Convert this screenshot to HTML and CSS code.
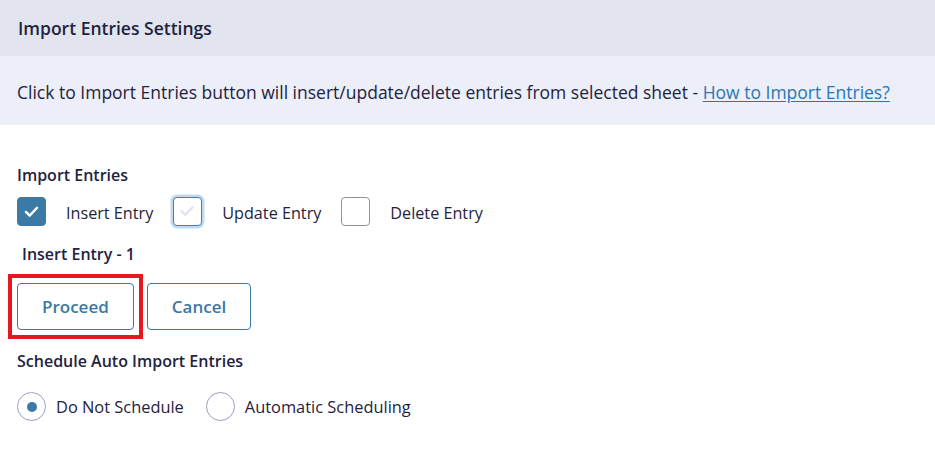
FILE: index.html
```html
<!DOCTYPE html>
<html lang="en">
<head>
<meta charset="utf-8">
<title>Import Entries Settings</title>
<link rel="stylesheet" href="styles.css">
</head>
<body>
<div class="panel">
  <div class="panel-head">Import Entries Settings</div>
  <div class="notice">Click to Import Entries button will insert/update/delete entries from selected sheet - <a href="#" class="notice-link">How to Import Entries?</a></div>
  <div class="panel-body">
    <div class="field-label">Import Entries</div>
    <div class="check-row">
      <label class="check-item">
        <span class="checkbox checkbox-on">
          <svg viewBox="0 0 29 29" width="29" height="29"><polyline points="8.5,15 12.5,19 20.5,10.5" fill="none" stroke="#ffffff" stroke-width="2.6" stroke-linecap="round" stroke-linejoin="round"/></svg>
        </span>
        <span class="check-text">Insert Entry</span>
      </label>
      <label class="check-item">
        <span class="checkbox checkbox-focus">
          <svg viewBox="0 0 29 29" width="27" height="27"><polyline points="8,14 12,18 20,10" fill="none" stroke="#dfe1f1" stroke-width="2.4" stroke-linecap="round" stroke-linejoin="round"/></svg>
        </span>
        <span class="check-text">Update Entry</span>
      </label>
      <label class="check-item">
        <span class="checkbox"></span>
        <span class="check-text">Delete Entry</span>
      </label>
    </div>
    <div class="count-label">Insert Entry - 1</div>
    <div class="actions">
      <button class="btn btn-marked">Proceed</button>
      <button class="btn">Cancel</button>
    </div>
    <div class="field-label schedule-label">Schedule Auto Import Entries</div>
    <div class="radio-row">
      <label class="radio-item">
        <span class="radio radio-on"></span>
        <span class="radio-text">Do Not Schedule</span>
      </label>
      <label class="radio-item">
        <span class="radio"></span>
        <span class="radio-text">Automatic Scheduling</span>
      </label>
    </div>
  </div>
</div>
</body>
</html>
```

FILE: styles.css
```css
html, body {
  margin: 0;
  padding: 0;
  background: #ffffff;
}

body {
  font-family: "Open Sans", "Noto Sans", sans-serif;
  font-size: 16px;
  color: #1f2340;
}

.panel {
  width: 935px;
}

.panel-head {
  height: 56px;
  box-sizing: border-box;
  padding: 0 18px;
  display: flex;
  align-items: center;
  background: #e2e5ee;
  font-weight: 600;
  font-size: 17.5px;
}

.notice {
  background: #eceef8;
  padding: 24px 17px 21px;
  line-height: 24px;
  font-size: 17.5px;
}

.notice-link {
  color: #2a76b5;
  text-decoration: underline;
  text-underline-offset: 2px;
}

.panel-body {
  padding: 38px 17px 0;
}

.field-label {
  font-weight: 600;
  line-height: 24px;
}

.check-row {
  display: flex;
  align-items: center;
  margin-top: 10px;
  height: 29px;
}

.check-item {
  display: flex;
  align-items: center;
  margin-right: 20px;
}

.checkbox {
  width: 29px;
  height: 29px;
  box-sizing: border-box;
  border: 1px solid #8e90ad;
  border-radius: 4px;
  display: flex;
  align-items: center;
  justify-content: center;
  background: #ffffff;
}

.checkbox-on {
  background: #3c7aa6;
  border-color: #3c7aa6;
}

.checkbox-focus {
  border: 1.5px solid #3a82c0;
  box-shadow: 0 0 0 2.5px rgba(100, 160, 215, 0.4);
}

.check-text {
  margin-left: 20px;
  font-size: 16.2px;
  position: relative;
  top: 1px;
}

.count-label {
  font-weight: 600;
  line-height: 24px;
  margin-top: 16px;
  padding-left: 5px;
}

.actions {
  display: flex;
  gap: 13px;
  margin-top: 17px;
}

.btn {
  position: relative;
  height: 47px;
  box-sizing: border-box;
  padding: 0 24px;
  border: 1px solid #3c7aa6;
  border-radius: 4px;
  background: #ffffff;
  color: #3a78a5;
  font-family: "Open Sans", "Noto Sans", sans-serif;
  font-size: 17px;
  font-weight: 600;
}

.btn-marked::after {
  content: "";
  position: absolute;
  top: -10px;
  left: -10px;
  right: -10px;
  bottom: -10px;
  border: 4px solid #e8161e;
  pointer-events: none;
}

.schedule-label {
  margin-top: 19px;
}

.radio-row {
  display: flex;
  align-items: center;
  margin-top: 19px;
}

.radio-item {
  display: flex;
  align-items: center;
  margin-right: 22px;
}

.radio {
  width: 29px;
  height: 29px;
  box-sizing: border-box;
  border: 1px solid #9b9dc2;
  border-radius: 50%;
  display: flex;
  align-items: center;
  justify-content: center;
  background: #ffffff;
}

.radio-on::after {
  content: "";
  width: 10px;
  height: 10px;
  border-radius: 50%;
  background: #3c7aa6;
}

.radio-text {
  margin-left: 10px;
  font-size: 16.4px;
}
```
